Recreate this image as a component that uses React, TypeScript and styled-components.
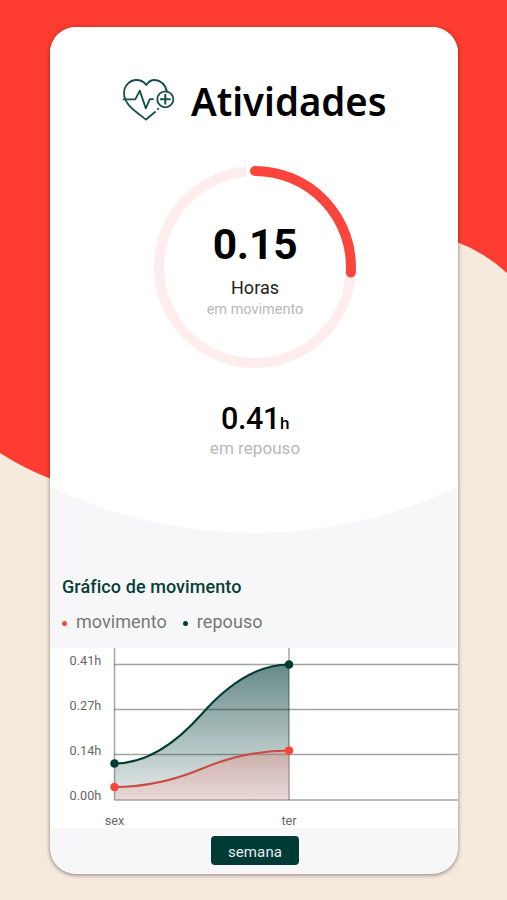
import React from "react";
import styled, { createGlobalStyle } from "styled-components";

const GlobalStyle = createGlobalStyle`
  * { box-sizing: border-box; }
  body { margin: 0; font-family: Roboto, sans-serif; background: #f6eadf; }
`;

const Page = styled.main`
  position: relative;
  width: 507px;
  height: 900px;
  padding: 27px 49px 26px 50px;
  overflow: hidden;
  background: #f6eadf;
`;

const Backdrop = styled.svg`
  position: absolute;
  inset: 0;
`;

const Card = styled.section`
  position: relative;
  display: flex;
  flex-direction: column;
  height: 847px;
  border-radius: 26px;
  overflow: hidden;
  background: #f7f7fa;
  box-shadow: 0 1px 4px rgba(50, 25, 15, 0.55);
`;

const Hero = styled.div`
  display: flex;
  flex-direction: column;
  align-items: center;
  height: 507px;
  background: radial-gradient(circle 475px at 50% 31px, #fff 99.9%, #f7f7fa 100%);
`;

const Header = styled.header`
  display: flex;
  align-items: center;
  gap: 16px;
  align-self: flex-start;
  height: 54px;
  margin: 46px 0 0 72px;
`;

const Title = styled.h1`
  margin: 2px 0 0;
  font: 600 39px/54px "Noto Sans", sans-serif;
  color: #000;
  white-space: nowrap;
  transform: scaleX(0.982);
  transform-origin: left;
`;

const Dial = styled.div`
  display: grid;
  width: 204px;
  height: 204px;
  margin: 38px 0 0 2px;
  > * { grid-area: 1 / 1; }
`;

const DialText = styled.div`
  display: flex;
  flex-direction: column;
  align-items: center;
  padding-top: 54px;
`;

const DialValue = styled.div`
  font-size: 42.5px;
  line-height: 52px;
  font-weight: 700;
  letter-spacing: -0.2px;
`;

const DialUnit = styled.div`
  margin-top: 6px;
  font-size: 18px;
  line-height: 22px;
  color: #222;
`;

const Caption = styled.div<{ $size: number }>`
  font-size: ${(p) => p.$size}px;
  line-height: 22px;
  color: #b8b8b8;
`;

const Rest = styled.div`
  display: flex;
  flex-direction: column;
  align-items: center;
  margin: 32px 0 0 2px;
`;

const RestValue = styled.div`
  font-size: 30.5px;
  line-height: 36px;
  font-weight: 500;
  letter-spacing: -0.4px;
  margin-bottom: -4px;
  small { font-size: 17px; }
`;

const ChartHeading = styled.h2`
  margin: 43px 0 0 12px;
  font-size: 18px;
  line-height: 20px;
  font-weight: 500;
  letter-spacing: 0.08px;
  color: #073e38;
`;

const Legend = styled.div`
  display: flex;
  gap: 16px;
  height: 22px;
  margin: 14px 0 15px 12px;
`;

const LegendItem = styled.span<{ $color: string }>`
  display: flex;
  align-items: center;
  gap: 9px;
  font-size: 18px;
  line-height: 22px;
  letter-spacing: 0.06px;
  color: #777;
  &::before {
    content: "";
    width: 5px;
    height: 5px;
    margin-top: 3px;
    border-radius: 50%;
    background: ${(p) => p.$color};
  }
`;

const Chart = styled.svg`
  display: block;
  flex: none;
  background: #fff;
  font: 12.7px Roboto, sans-serif;
`;

const WeekButton = styled.button`
  align-self: center;
  width: 88px;
  height: 29px;
  margin: 8px 0 0 2px;
  padding: 2px 0 0;
  border: 0;
  border-radius: 4px;
  background: #003b36;
  color: #e6efee;
  font: 15px Roboto, sans-serif;
  letter-spacing: 0.1px;
`;

const gridRows = [
  { y: 16.5, label: "0.41h" },
  { y: 61.5, label: "0.27h" },
  { y: 106.5, label: "0.14h" },
  { y: 152, label: "0.00h" },
];
const X0 = 64.5;
const X1 = 239;
const BASE = 152;

const curve = (a: number, b: number) => {
  const xm = (X0 + X1) / 2;
  const ym = (a + b) / 2;
  return `M${X0} ${a}Q${(X0 + xm) / 2} ${a} ${xm} ${ym}Q${(xm + X1) / 2} ${b} ${X1} ${b}`;
};

function Series({ from, to, color, line, fill }: { from: number; to: number; color: string; line: string; fill: string }) {
  return (
    <g>
      <path d={`${curve(from, to)}V${BASE}H${X0}Z`} fill={fill} />
      <path d={curve(from, to)} fill="none" stroke={line} strokeWidth="2" />
      <circle cx={X0} cy={from} r="4.3" fill={color} />
      <circle cx={X1} cy={to} r="4.3" fill={color} />
    </g>
  );
}

function MovementChart() {
  return (
    <Chart width="408" height="180" viewBox="0 0 408 180">
      <defs>
        <linearGradient id="rest" gradientUnits="userSpaceOnUse" x1="0" y1="16" x2="0" y2="152">
          <stop offset="0" stopColor="#003b36" stopOpacity="0.6" />
          <stop offset="1" stopColor="#003b36" stopOpacity="0.1" />
        </linearGradient>
        <linearGradient id="move" gradientUnits="userSpaceOnUse" x1="0" y1="100" x2="0" y2="152">
          <stop offset="0" stopColor="#e88980" stopOpacity="0.42" />
          <stop offset="1" stopColor="#f5a29c" stopOpacity="0.24" />
        </linearGradient>
      </defs>
      <g stroke="#000" strokeOpacity="0.36" strokeWidth="1.5">
        {gridRows.map((r) => <path key={r.y} d={`M${X0} ${r.y}H408`} />)}
        <path d={`M${X0} 0V152M${X1} 0V152`} />
      </g>
      <Series from={115.5} to={16.5} color="#003b36" line="#003b36" fill="url(#rest)" />
      <Series from={139} to={102.5} color="#fa453c" line="#c94b44" fill="url(#move)" />
      <g fill="#666">
        {gridRows.map((r) => <text key={r.label} x="51.3" y={r.y + 0.3} textAnchor="end">{r.label}</text>)}
        <text x="64.5" y="177.2" textAnchor="middle">sex</text>
        <text x="239" y="177.2" textAnchor="middle">ter</text>
      </g>
    </Chart>
  );
}

function HeartIcon() {
  return (
    <svg width="53" height="44" viewBox="0 0 53 44" fill="none" stroke="#164f49" strokeWidth="1.8" strokeLinecap="round" strokeLinejoin="round">
      <path d="M45 13.8C43.5 6 38 2 32.5 2C28.5 2 26.2 4.1 24.3 7C21.5 3.2 18.5 2 14.5 2C7.5 2 2 8 2 15.3C2 26.5 14 34 24 41.5L33 34" />
      <path d="M1.5 21.4H13.3L17.8 12.6L23.8 30.4L27.8 21.1H31" />
      <circle cx="43.3" cy="21.3" r="8" />
      <path d="M38.8 21.3H47.8M43.3 16.8V25.8" strokeWidth="2" />
      <path d="M36 31L36.3 30.7" />
    </svg>
  );
}

export default function App() {
  return (
    <Page>
      <GlobalStyle />
      <Backdrop width="507" height="900" viewBox="0 0 507 900">
        <path d="M0 0H507V273Q484 252 458 242.5C330 195 300 510 140 492Q90 493 50 478.5Q25 469 0 453Z" fill="#ff3c30" />
      </Backdrop>
      <Card>
        <Hero>
          <Header>
            <HeartIcon />
            <Title>Atividades</Title>
          </Header>
          <Dial>
            <svg width="204" height="204" viewBox="0 0 204 204" fill="none" strokeWidth="10">
              <path d="M198 102A96 96 0 1 1 93.5 6.4" stroke="#ffecec" />
              <path d="M102 6A96 96 0 0 1 197.8 107.5" stroke="#fa453c" strokeLinecap="round" />
            </svg>
            <DialText>
              <DialValue>0.15</DialValue>
              <DialUnit>Horas</DialUnit>
              <Caption $size={14.5}>em movimento</Caption>
            </DialText>
          </Dial>
          <Rest>
            <RestValue>0.41<small>h</small></RestValue>
            <Caption $size={17.1}>em repouso</Caption>
          </Rest>
        </Hero>
        <ChartHeading>Gráfico de movimento</ChartHeading>
        <Legend>
          <LegendItem $color="#fa453c">movimento</LegendItem>
          <LegendItem $color="#003b36">repouso</LegendItem>
        </Legend>
        <MovementChart />
        <WeekButton>semana</WeekButton>
      </Card>
    </Page>
  );
}
